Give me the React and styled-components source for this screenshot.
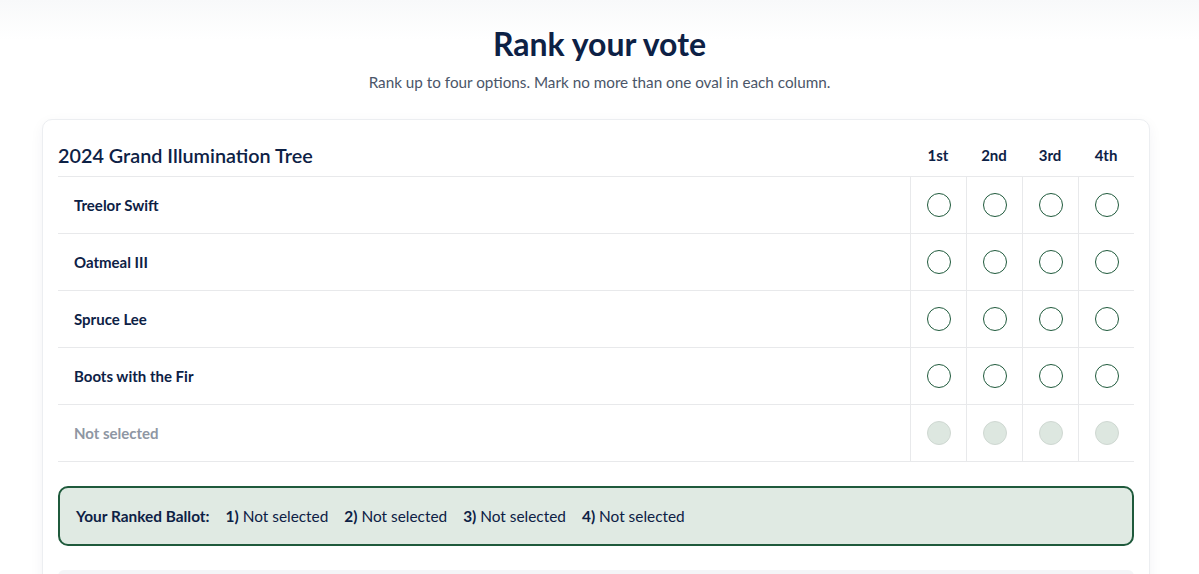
import React from "react";
import styled, { createGlobalStyle } from "styled-components";

const Global = createGlobalStyle`
  * { box-sizing: border-box; }
  html, body { margin: 0; padding: 0; }
  body {
    font-family: Lato, "Open Sans", sans-serif;
    background: linear-gradient(to bottom, #f8f9fa 0px, #ffffff 40px);
    color: #0f2245;
  }
`;

const Page = styled.main`
  padding: 24px 42px 0 42px;
  min-height: 574px;
`;

const Header = styled.header`
  text-align: center;
  margin-bottom: 27px;
`;

const Title = styled.h1`
  margin: 0;
  font-size: 32px;
  line-height: 40px;
  font-weight: 700;
  color: #0d2145;
`;

const Subtitle = styled.p`
  margin: 8px 0 0;
  font-size: 15.25px;
  line-height: 20px;
  color: #4a5568;
`;

const Card = styled.section`
  width: 1108px;
  background: #fff;
  border: 1px solid #eceef1;
  border-radius: 10px;
  box-shadow: 0 4px 14px rgba(15, 34, 69, 0.05);
  padding: 14px 15px 0 15px;
  min-height: 470px;
`;

const Grid = styled.div`
  display: grid;
  grid-template-columns: 1fr repeat(4, 56px);
`;

const Caption = styled.div`
  display: flex;
  align-items: center;
  height: 43px;
  font-size: 19.8px;
  font-weight: 600;
  color: #0d2145;
  border-bottom: 1px solid #e8e9eb;
`;

const ColHead = styled.div`
  display: flex;
  align-items: center;
  justify-content: center;
  height: 43px;
  font-size: 15px;
  font-weight: 700;
  color: #0d2145;
  border-bottom: 1px solid #e8e9eb;
`;

const Name = styled.div`
  display: flex;
  align-items: center;
  height: 57px;
  padding-left: 16px;
  font-size: 15px;
  font-weight: 700;
  color: ${(p) => (p.$muted ? "#8e96a3" : "#0d2145")};
  border-bottom: 1px solid #e8e9eb;
`;

const Cell = styled.div`
  display: flex;
  align-items: center;
  justify-content: center;
  height: 57px;
  border-bottom: 1px solid #e8e9eb;
  border-left: 1px solid #e8e9eb;
`;

const Oval = styled.span`
  width: 24px;
  height: 24px;
  border-radius: 50%;
  border: 1px solid ${(p) => (p.$disabled ? "#cfd8d2" : "#1f5a3c")};
  background: ${(p) => (p.$disabled ? "#dde7e0" : "#fff")};
`;

const Summary = styled.div`
  margin-top: 24px;
  height: 60px;
  display: flex;
  align-items: center;
  gap: 16px;
  padding: 0 16px;
  border: 2px solid #1f5a3c;
  border-radius: 10px;
  background: #e0eae3;
  font-size: 15.4px;
  color: #0d2145;
`;

const SummaryLabel = styled.strong`
  font-weight: 700;
`;

const Pick = styled.span`
  b { font-weight: 700; }
`;

const Footer = styled.div`
  margin-top: 24px;
  height: 40px;
  background: #f4f5f7;
  border-radius: 6px 6px 0 0;
`;

const options = ["Treelor Swift", "Oatmeal III", "Spruce Lee", "Boots with the Fir"];
const ranks = ["1st", "2nd", "3rd", "4th"];

export default function App() {
  return (
    <>
      <Global />
      <Page>
        <Header>
          <Title>Rank your vote</Title>
          <Subtitle>Rank up to four options. Mark no more than one oval in each column.</Subtitle>
        </Header>
        <Card>
          <Grid>
            <Caption>2024 Grand Illumination Tree</Caption>
            {ranks.map((r) => (
              <ColHead key={r}>{r}</ColHead>
            ))}
            {options.map((o) => (
              <React.Fragment key={o}>
                <Name>{o}</Name>
                {ranks.map((r) => (
                  <Cell key={r}>
                    <Oval />
                  </Cell>
                ))}
              </React.Fragment>
            ))}
            <Name $muted>Not selected</Name>
            {ranks.map((r) => (
              <Cell key={r}>
                <Oval $disabled />
              </Cell>
            ))}
          </Grid>
          <Summary>
            <SummaryLabel>Your Ranked Ballot:</SummaryLabel>
            {[1, 2, 3, 4].map((n) => (
              <Pick key={n}>
                <b>{n})</b> Not selected
              </Pick>
            ))}
          </Summary>
          <Footer />
        </Card>
      </Page>
    </>
  );
}
